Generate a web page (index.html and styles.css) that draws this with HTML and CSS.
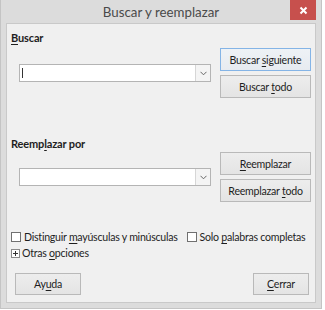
FILE: index.html
```html
<!DOCTYPE html>
<html lang="es">
<head>
<meta charset="utf-8">
<title>Buscar y reemplazar</title>
<link rel="stylesheet" href="styles.css">
</head>
<body>
<div class="window">
  <div class="titlebar">
    <span></span>
    <span class="title">Buscar y reemplazar</span>
    <span class="close"><svg width="9" height="9" viewBox="0 0 9 9"><path d="M1.5 1.5 L7.5 7.5 M7.5 1.5 L1.5 7.5" stroke="#fff" stroke-width="2"/></svg></span>
  </div>
  <div class="panel">
    <div class="label first"><u>B</u>uscar</div>
    <div class="row">
      <div class="combo"><span class="caret"></span><span class="drop"><svg width="7" height="5" viewBox="0 0 7 5"><path d="M0.5 0.8 L3.5 3.8 L6.5 0.8" fill="none" stroke="#666" stroke-width="1"/></svg></span></div>
      <div class="btncol">
        <div class="btn default"><span>Buscar <u>s</u>iguiente</span></div>
        <div class="btn"><span>Buscar <u>t</u>odo</span></div>
      </div>
    </div>
    <div class="label second">Reemp<u>l</u>azar por</div>
    <div class="row">
      <div class="combo"><span class="drop"><svg width="7" height="5" viewBox="0 0 7 5"><path d="M0.5 0.8 L3.5 3.8 L6.5 0.8" fill="none" stroke="#666" stroke-width="1"/></svg></span></div>
      <div class="btncol">
        <div class="btn"><span><u>R</u>eemplazar</span></div>
        <div class="btn"><span>Reemplazar <u>t</u>odo</span></div>
      </div>
    </div>
    <div class="checks">
      <div class="check"><span class="box"></span><span class="txt">Distinguir <u>m</u>ayúsculas y minúsculas</span></div>
      <div class="check"><span class="box"></span><span class="txt">Solo <u>p</u>alabras completas</span></div>
    </div>
    <div class="more"><span class="plus"><svg width="9" height="9" viewBox="0 0 9 9"><rect x="0.5" y="0.5" width="8" height="8" fill="#fff" stroke="#8a8a8a"/><path d="M2 4.5 H7 M4.5 2 V7" stroke="#333" stroke-width="1"/></svg></span><span class="txt">Otras <u>o</u>pciones</span></div>
    <div class="footer">
      <div class="btn help"><span>Ay<u>u</u>da</span></div>
      <div class="btn closebtn"><span><u>C</u>errar</span></div>
    </div>
  </div>
</div>
</body>
</html>
```

FILE: styles.css
```css
* { box-sizing: border-box; }
html, body { margin: 0; padding: 0; background: #fff; }
body {
  font-family: "Lato", "Open Sans", sans-serif;
  font-size: 10.6px;
  letter-spacing: -0.25px;
  color: #1e1e1e;
  width: 325px;
  height: 310px;
}
u { text-decoration: underline; text-underline-offset: 2px; text-decoration-thickness: 1px; }
.window {
  width: 322px;
  height: 309px;
  background: #dcdcdc;
  border: 1px solid #c4c4c4;
  border-top: none;
  display: flex;
  flex-direction: column;
}
.titlebar {
  height: 23px;
  display: grid;
  grid-template-columns: 1fr auto 1fr;
  align-items: start;
}
.title {
  font-size: 13.3px;
  letter-spacing: 0;
  color: #4a4a4a;
  line-height: 25px;
}
.close {
  justify-self: end;
  margin-right: 5px;
  width: 26px;
  height: 20px;
  background: #c7504d;
  display: flex;
  align-items: center;
  justify-content: center;
}
.panel {
  margin: 0 5px;
  height: 280px;
  background: #f0f0f0;
  border: 1px solid #c9c9c9;
  padding: 0 4px 0 4px;
  display: flex;
  flex-direction: column;
}
.label {
  font-weight: 700;
  font-size: 11px;
  letter-spacing: -0.15px;
  line-height: 16px;
  height: 16px;
  white-space: nowrap;
}
.label.first { margin-top: 6px; margin-bottom: 2px; }
.label.second { margin-top: 38px; }
.row {
  display: flex;
  align-items: center;
  justify-content: space-between;
}
.combo {
  margin-left: 8px;
  width: 192px;
  height: 18px;
  background: #fff;
  border: 1px solid #b4b4b4;
  display: flex;
  align-items: center;
}
.caret {
  width: 1px;
  height: 10px;
  background: #333;
  margin-left: 2px;
}
.drop {
  margin-left: auto;
  width: 15px;
  height: 16px;
  border-left: 1px solid #d6d6d6;
  background: #f4f4f4;
  display: flex;
  align-items: center;
  justify-content: center;
}
.btncol {
  display: flex;
  flex-direction: column;
  gap: 4px;
}
.btn {
  width: 91px;
  height: 23px;
  border: 1px solid #b9b9b9;
  background: linear-gradient(#ededed, #e4e4e4);
  display: flex;
  align-items: center;
  justify-content: center;
  white-space: nowrap;
  color: #1e1e1e;
}
.btn.default { border-color: #84b4e6; background: linear-gradient(#eef2f6, #e7ebf0); }
.checks {
  margin-top: 27px;
  display: flex;
  align-items: center;
  gap: 9px;
  line-height: 16px;
}
.check { display: flex; align-items: center; white-space: nowrap; }
.box {
  width: 10px;
  height: 10px;
  border: 1px solid #707070;
  background: #fff;
  margin-right: 3px;
}
.more {
  display: flex;
  align-items: center;
  line-height: 16px;
  white-space: nowrap;
}
.plus { display: flex; margin-right: 2px; }
.footer {
  margin-top: 12px;
  display: flex;
  justify-content: space-between;
  padding: 0 2px 0 4px;
}
.btn.help { width: 66px; height: 22px; }
.btn.closebtn { width: 56px; height: 22px; }
```
